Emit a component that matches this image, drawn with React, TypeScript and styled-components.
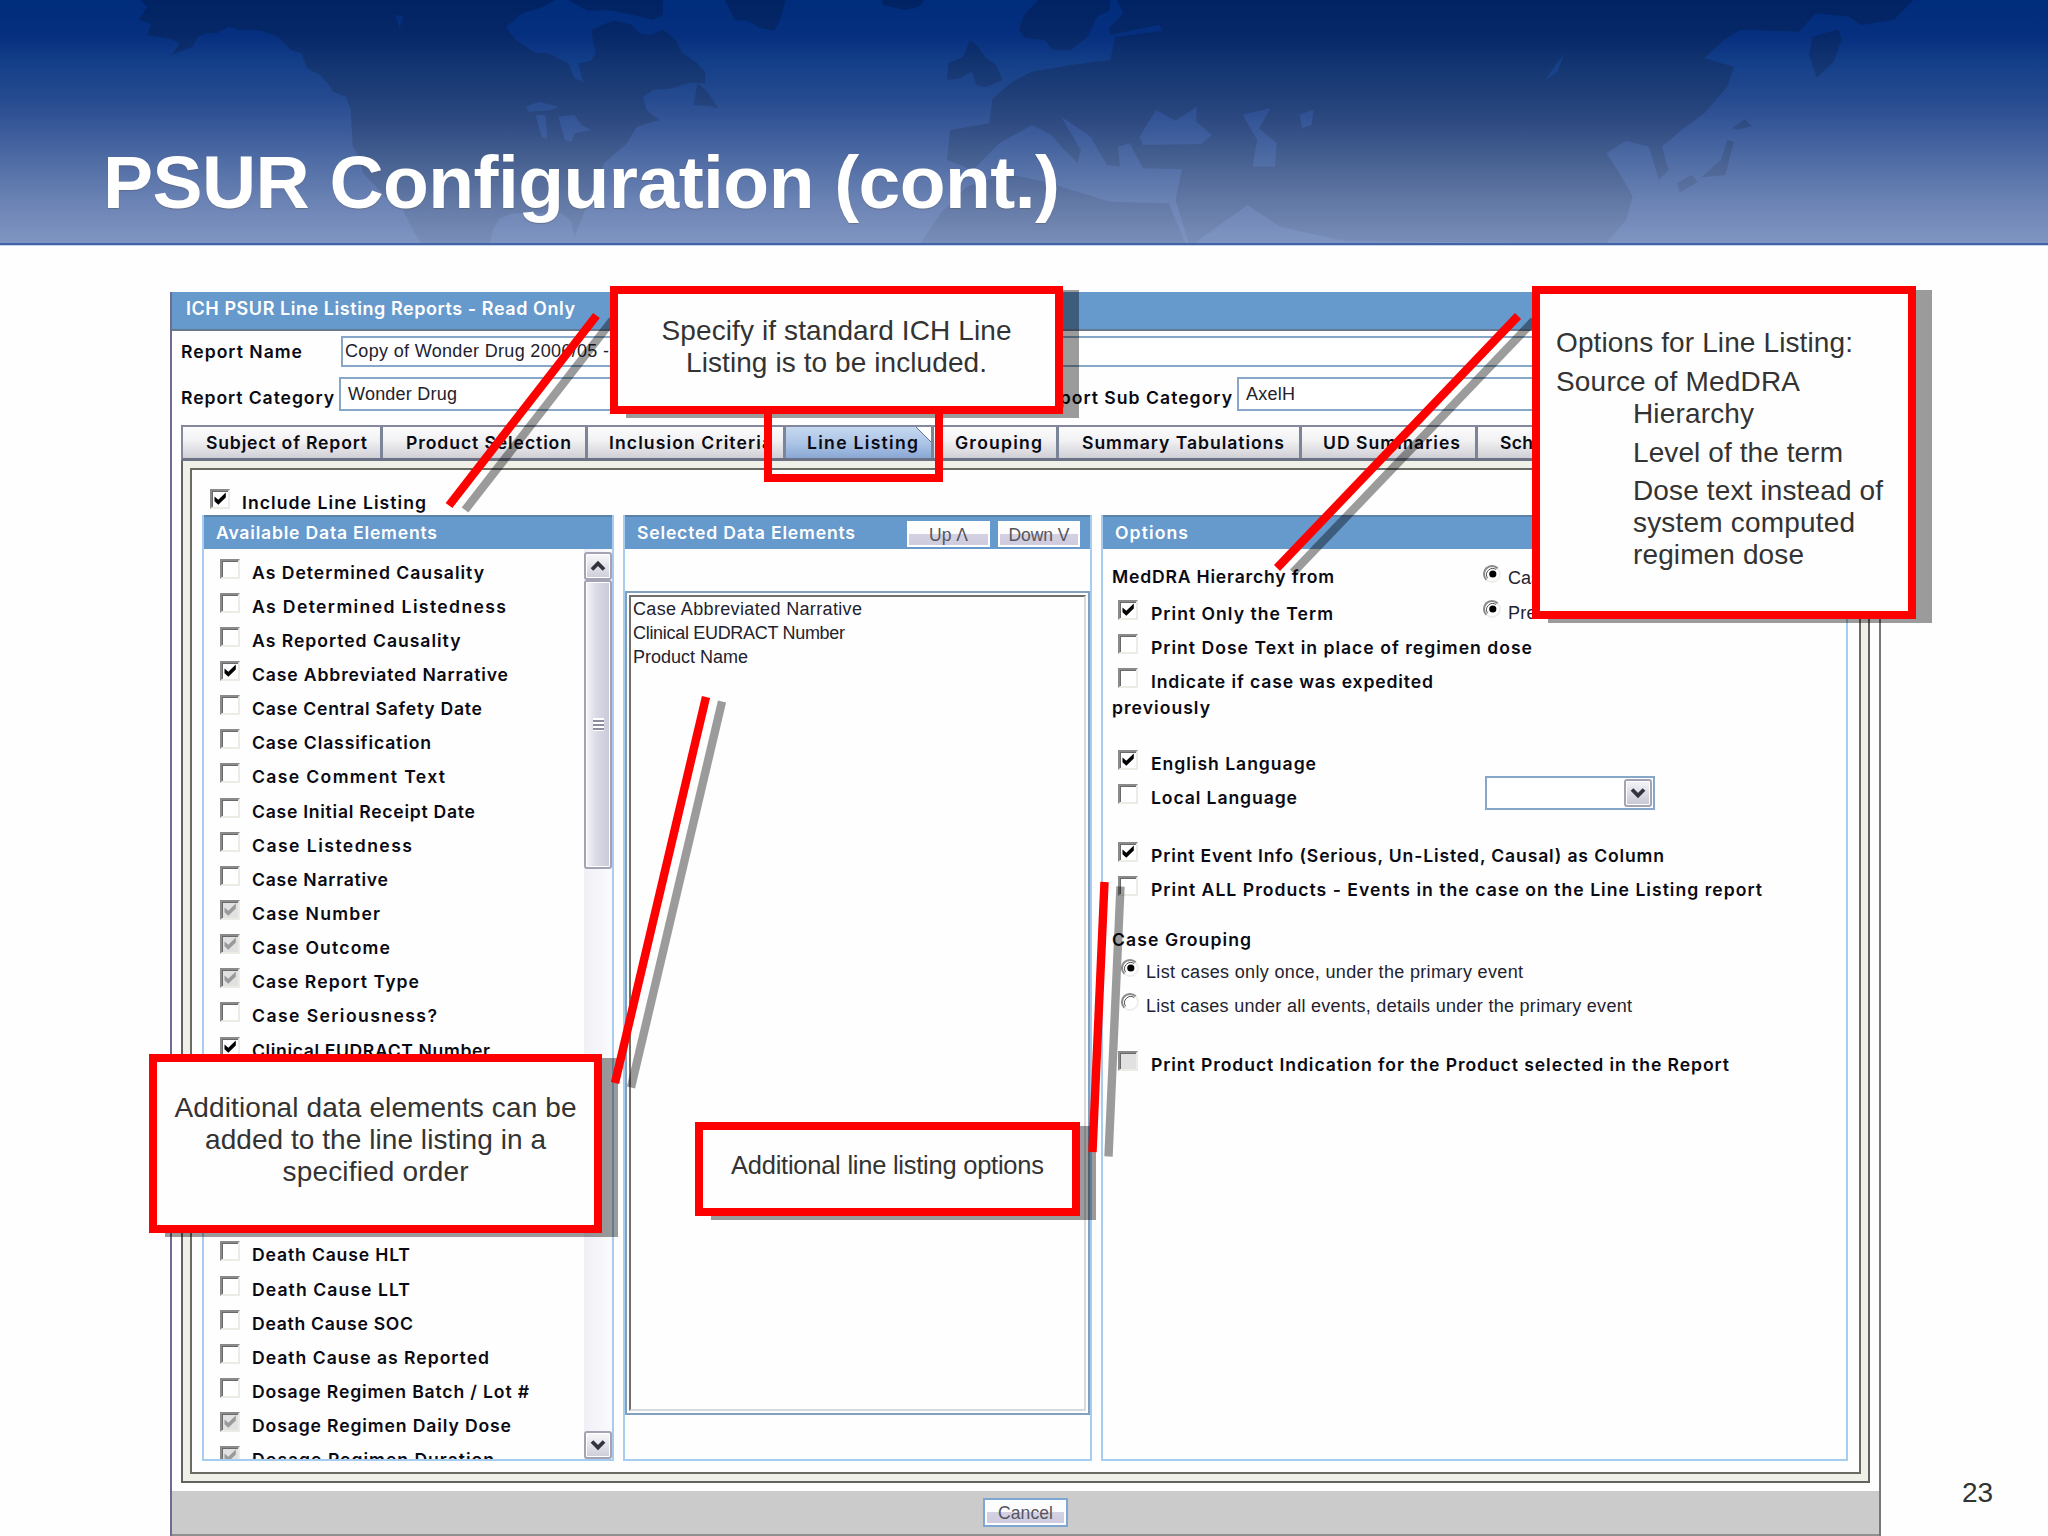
import React, { useLayoutEffect, useRef, useState } from 'react';
import styled, { createGlobalStyle, css } from 'styled-components';

const Global = createGlobalStyle`
  html, body { margin: 0; padding: 0; background: #fefefe; }
  * { box-sizing: border-box; }
`;

const labelFont = "Inter, 'Liberation Sans', Arial, sans-serif";
const plainFont = "'Liberation Sans', Arial, sans-serif";

const labelText = css`
  font-family: ${labelFont};
  font-size: 17.6px;
  font-weight: 580;
`;

const plainText = css`
  font-family: ${plainFont};
  font-size: 18px;
  font-weight: 400;
  color: #22222e;
`;

/* ---------- text tracked out to a fixed measure ---------- */

const Tracked = styled.span`
  display: inline-block;
  white-space: pre;
  flex: none;
`;

function Fit({ w, children }: { w: number; children: string }) {
  const ref = useRef<HTMLSpanElement>(null);
  const [spacing, setSpacing] = useState(0);
  useLayoutEffect(() => {
    if (!ref.current) return;
    const natural = ref.current.getBoundingClientRect().width;
    setSpacing((w - natural) / Math.max(1, children.length - 1));
  }, [w, children]);
  return (
    <Tracked ref={ref} style={{ letterSpacing: spacing, marginRight: -spacing }}>
      {children}
    </Tracked>
  );
}

/* ---------- slide ---------- */

const Slide = styled.main`
  position: relative;
  width: 2048px;
  height: 1536px;
  overflow: hidden;
  background: #fefefe;
  font-family: ${plainFont};
`;

const Banner = styled.header`
  position: relative;
  height: 246px;
  padding: 139px 0 0 103px;
  border-bottom: 1px solid #c4d4ee;
  box-shadow: inset 0 -2px 0 #4263a8;
  background: linear-gradient(
    #002c7c 0px, #06307f 36px, #16418a 68px, #24498e 95px, #3a5a9a 130px,
    #4f6ca4 160px, #6a82b4 200px, #8095c1 243px
  );
`;

const MapArt = styled.svg`
  position: absolute;
  left: 0;
  top: 0;
  width: 2048px;
  height: 243px;
`;

const SlideTitle = styled.h1`
  position: relative;
  margin: 0;
  color: #fff;
  font-size: 75px;
  line-height: 86px;
  font-weight: 700;
  text-shadow: 0 1px 1px rgba(90, 95, 110, 0.6);
`;

const PageNumber = styled.div`
  position: absolute;
  left: 1962px;
  top: 1476px;
  font-size: 28px;
  line-height: 34px;
  color: #333;
`;

/* ---------- application window ---------- */

const Window = styled.section`
  display: flex;
  flex-direction: column;
  width: 1711px;
  height: 1244px;
  margin: 46px 0 0 170px;
  border-left: 2px solid #6c6c94;
  border-right: 2px solid #77777a;
  background: #fefefe;
  ${labelText}
  color: #0a0a14;
`;

const TitleBar = styled.div`
  flex: none;
  height: 39px;
  padding: 0 0 4px 14px;
  display: flex;
  align-items: center;
  background: #6699cc;
  border-bottom: 2px solid #66798f;
  color: #fff;
  font-size: 18px;
  font-weight: 600;
`;

const Fields = styled.div`
  flex: none;
  height: 94px;
  padding: 5px 0 0 9px;
`;

const FieldRow = styled.div<{ $gap?: number }>`
  display: flex;
  align-items: center;
  margin-top: ${(p) => p.$gap ?? 0}px;
`;

const FieldLabel = styled.label<{ $w: number; $drop?: number; $end?: boolean }>`
  flex: none;
  width: ${(p) => p.$w}px;
  padding-top: ${(p) => p.$drop ?? 0}px;
  padding-right: ${(p) => (p.$end ? 5 : 0)}px;
  text-align: ${(p) => (p.$end ? 'right' : 'left')};
`;

const TextBox = styled.div<{ $w: number; $h: number; $pad: number }>`
  flex: none;
  display: flex;
  align-items: center;
  width: ${(p) => p.$w}px;
  height: ${(p) => p.$h}px;
  padding-left: ${(p) => p.$pad}px;
  border: 2px solid #86a7c8;
  background: #fff;
  ${plainText}
`;

const Tabs = styled.nav`
  flex: none;
  display: flex;
  height: 36px;
  margin: 0 9px;
  border-top: 2px solid #83889c;
  border-bottom: 3px solid #6d7184;
  border-left: 2px solid #83889c;
`;

const Tab = styled.div<{ $w: number; $pad: number; $active?: boolean }>`
  flex: none;
  display: flex;
  align-items: center;
  width: ${(p) => p.$w}px;
  padding: 0 0 1px ${(p) => p.$pad}px;
  border-right: 3px solid #7c8598;
  background: linear-gradient(#fcfcfd, #f1f1f3 45%, #cfcfd6);
  overflow: hidden;
  ${(p) =>
    p.$active &&
    css`
      background: linear-gradient(225deg, #fff 0 10px, #5a7299 10px 11.2px, transparent 11.2px),
        linear-gradient(#c5d8f0, #adc5e6 50%, #8aa8d6);
    `}
`;

const Frame = styled.div`
  flex: none;
  height: 1022px;
  margin: 0 9px;
  padding: 7px;
  border: 2px solid #62625e;
  border-top: 0;
  background: #eff0e8;
`;

const TabBody = styled.div`
  display: flex;
  flex-direction: column;
  height: 1006px;
  background: #fefefe;
  border: 2px solid #6b6b66;
`;

const IncludeRow = styled.div`
  flex: none;
  display: flex;
  align-items: center;
  gap: 12px;
  height: 45px;
  padding: 19px 0 0 18px;
`;

const Panels = styled.div`
  flex: none;
  display: grid;
  grid-template-columns: 412px 469px 747px;
  column-gap: 9px;
  height: 946px;
  margin-left: 10px;
`;

const Panel = styled.section`
  display: flex;
  flex-direction: column;
  min-height: 0;
  border: 2px solid #a6cdf0;
  border-top: 0;
  overflow: hidden;
`;

const PanelHead = styled.header`
  flex: none;
  display: flex;
  align-items: center;
  height: 34px;
  margin: 0 -2px;
  padding: 0 12px 1px 14px;
  border-top: 2px solid #5c82a8;
  background: #6699cc;
  color: #fff;
  font-size: 17.6px;
  font-weight: 600;
`;

const HeadActions = styled.div`
  display: flex;
  gap: 8px;
  margin-left: auto;
  padding-top: 3px;
`;

const PushButton = styled.button<{ $w: number; $h: number; $blue?: boolean }>`
  width: ${(p) => p.$w}px;
  height: ${(p) => p.$h}px;
  padding: 2px 0 0;
  border: ${(p) => (p.$blue ? '2px solid #7fa6d2' : '0')};
  box-shadow: inset 0 0 0 2px #fff;
  background: linear-gradient(#fdfdfe 0 48%, #d4d2e2 50%, #cdcbdd 90%, #fff);
  font: 400 17.5px ${plainFont};
  color: #55555e;
`;

/* ---------- check boxes, radios, scroll bar ---------- */

const Box = styled.span<{ $dim?: boolean }>`
  flex: none;
  width: 20px;
  height: 20px;
  margin-bottom: 7px;
  border: 2px solid #ecece6;
  border-top-color: #8a8a8a;
  border-left-color: #8a8a8a;
  box-shadow: inset 1px 1px 0 #6a6a6a;
  background: ${(p) => (p.$dim ? '#e2e1e2' : '#fff')};
  svg { display: block; width: 16px; height: 16px; }
`;

type CheckState = 'off' | 'on' | 'dim' | 'dimOff';

function Check({ state }: { state: CheckState }) {
  return (
    <Box $dim={state === 'dim' || state === 'dimOff'}>
      {(state === 'on' || state === 'dim') && (
        <svg viewBox="0 0 16 16">
          <path d="M2.5 5.5 L6.3 8.8 L13.8 1.5 V6.5 L6.3 13.8 L2.5 10.2 Z" fill={state === 'on' ? '#000' : '#9a9a9a'} />
        </svg>
      )}
    </Box>
  );
}

const RadioArt = styled.svg`
  flex: none;
  width: 20px;
  height: 20px;
  margin-bottom: 8px;
`;

function Radio({ on }: { on?: boolean }) {
  return (
    <RadioArt viewBox="0 0 20 20">
      <circle cx="10" cy="10" r="8" fill="#fff" stroke="#eeeeea" strokeWidth="2" />
      <path d="M4.3 15.7 A8 8 0 0 1 15.7 4.3" fill="none" stroke="#8a8a8a" strokeWidth="2" />
      <path d="M5.6 14.2 A6.2 6.2 0 0 1 14.2 5.6" fill="none" stroke="#555" strokeWidth="1" />
      {on && <circle cx="10.8" cy="10" r="3.6" fill="#000" />}
    </RadioArt>
  );
}

const ListArea = styled.div`
  flex: 1;
  display: flex;
  min-height: 0;
`;

const Rows = styled.ul`
  flex: 1;
  margin: 0;
  padding: 6px 0 0 16px;
  list-style: none;
  overflow: hidden;
`;

const Row = styled.li`
  display: flex;
  align-items: center;
  gap: 12px;
  height: 34.15px;
`;

const RowGap = styled.li`
  height: 170.75px;
`;

const ScrollBar = styled.div`
  flex: none;
  display: flex;
  flex-direction: column;
  width: 28px;
  padding-top: 3px;
  background: linear-gradient(90deg, #efeff6, #fbfbfd);
`;

const scrollFace = css`
  border: 2px solid #a3a3b4;
  border-radius: 3px;
  box-shadow: inset 0 0 0 1px #fff;
`;

const ScrollButton = styled.div`
  ${scrollFace}
  flex: none;
  display: flex;
  align-items: center;
  justify-content: center;
  height: 28px;
  background: linear-gradient(#f8f8fb, #cdcdd9);
`;

const Thumb = styled.div`
  ${scrollFace}
  height: 289px;
  margin-bottom: auto;
  display: flex;
  align-items: center;
  justify-content: center;
  background: linear-gradient(90deg, #f4f4fa, #dcdce8 40%, #c9c9d8);
`;

const Grip = styled.div`
  width: 11px;
  height: 13px;
  background: repeating-linear-gradient(#fff 0 2px, #8d8da0 2px 4px);
`;

function Chevron({ up }: { up?: boolean }) {
  return (
    <svg width="16" height="12" viewBox="0 0 16 12">
      <path d={up ? 'M2 9.5 L8 3.5 L14 9.5' : 'M2 2.5 L8 8.5 L14 2.5'} fill="none" stroke="#333340" strokeWidth="3.8" />
    </svg>
  );
}

/* ---------- selected elements ---------- */

const SelectedList = styled.div`
  height: 824px;
  margin: 42px 0 0;
  padding: 2px;
  border: 2px solid #82a0c0;
`;

const SelectedInner = styled.div`
  height: 100%;
  padding: 0 0 0 2px;
  border: 2px solid #dadade;
  border-top-color: #6f6f6a;
  border-left-color: #6f6f6a;
  background: #fefefe;
`;

const SelectedItem = styled.div`
  height: 24px;
  line-height: 24px;
  ${plainText}
`;

/* ---------- options ---------- */

const OptionList = styled.div`
  padding: 10px 0 0 9px;
`;

const OptionRow = styled.div<{ $gap?: number; $indent?: number; $h?: number; $space?: number }>`
  display: flex;
  align-items: center;
  gap: ${(p) => p.$space ?? 13}px;
  height: ${(p) => p.$h ?? 34}px;
  margin-top: ${(p) => p.$gap ?? 0}px;
  padding-left: ${(p) => p.$indent ?? 0}px;
`;

const OptionLead = styled.div<{ $w: number }>`
  flex: none;
  display: flex;
  align-items: center;
  gap: 13px;
  width: ${(p) => p.$w}px;
`;

const Choice = styled.div<{ $w?: number; $drop?: number }>`
  flex: none;
  display: flex;
  align-items: center;
  gap: 6px;
  width: ${(p) => (p.$w ? p.$w + 'px' : 'auto')};
  padding-top: ${(p) => p.$drop ?? 0}px;
  ${plainText}
`;

const Combo = styled.div`
  display: flex;
  justify-content: flex-end;
  width: 170px;
  height: 34px;
  margin-top: -9px;
  padding: 1px;
  border: 2px solid #86a7c8;
  background: #fff;
`;

const ComboButton = styled.div`
  ${scrollFace}
  display: flex;
  align-items: center;
  justify-content: center;
  width: 28px;
  background: linear-gradient(#f4f4f8, #c6c6d4);
`;

const Footer = styled.footer`
  display: flex;
  justify-content: center;
  align-items: flex-start;
  height: 45px;
  margin-top: 8px;
  padding: 7px 0 0;
  background: #cccbcb;
  border-bottom: 2px solid #8f8f90;
`;

/* ---------- callouts over the window ---------- */

const Callout = styled.aside<{ $x: number; $y: number; $w: number; $h: number; $pt: number; $left?: boolean; $size?: number }>`
  position: absolute;
  left: ${(p) => p.$x}px;
  top: ${(p) => p.$y}px;
  width: ${(p) => p.$w}px;
  height: ${(p) => p.$h}px;
  padding: ${(p) => p.$pt}px 0 0 ${(p) => (p.$left ? 16 : 0)}px;
  border: 8px solid #fe0000;
  background: #fefefe;
  box-shadow: 16px 4px 0 rgba(0, 0, 0, 0.39);
  color: #333;
  font-size: ${(p) => p.$size ?? 28}px;
  line-height: 32px;
  text-align: ${(p) => (p.$left ? 'left' : 'center')};
`;

const Para = styled.p<{ $indent?: number; $gap?: number }>`
  margin: ${(p) => p.$gap ?? 0}px 0 0 ${(p) => p.$indent ?? 0}px;
  height: 32px;
`;

const TabMarker = styled.div`
  position: absolute;
  left: 764px;
  top: 406px;
  width: 179px;
  height: 76px;
  border: 8px solid #fe0000;
`;

const Pointers = styled.svg`
  position: absolute;
  left: 0;
  top: 0;
  width: 2048px;
  height: 1536px;
  pointer-events: none;
`;

type Seg = [number, number, number, number];

function PointerLines({ lines }: { lines: Seg[] }) {
  return (
    <Pointers viewBox="0 0 2048 1536">
      {lines.map(([x1, y1, x2, y2], i) => (
        <g key={i} strokeWidth="8.4">
          <line x1={x1 + 16} y1={y1 + 4.5} x2={x2 + 16} y2={y2 + 4.5} stroke="rgba(0,0,0,0.39)" />
          <line x1={x1} y1={y1} x2={x2} y2={y2} stroke="#fe0000" />
        </g>
      ))}
    </Pointers>
  );
}

/* ---------- data ---------- */

const firstRows: [string, number, CheckState][] = [
  ['As Determined Causality', 232, 'off'],
  ['As Determined Listedness', 254, 'off'],
  ['As Reported Causality', 208.5, 'off'],
  ['Case Abbreviated Narrative', 256, 'on'],
  ['Case Central Safety Date', 230, 'off'],
  ['Case Classification', 179, 'off'],
  ['Case Comment Text', 193, 'off'],
  ['Case Initial Receipt Date', 223, 'off'],
  ['Case Listedness', 160, 'off'],
  ['Case Narrative', 136, 'off'],
  ['Case Number', 128, 'dim'],
  ['Case Outcome', 138, 'dim'],
  ['Case Report Type', 167, 'dim'],
  ['Case Seriousness?', 185, 'off'],
  ['Clinical EUDRACT Number', 238, 'on'],
];

const lastRows: [string, number, CheckState][] = [
  ['Death Cause HLT', 158, 'off'],
  ['Death Cause LLT', 158, 'off'],
  ['Death Cause SOC', 161, 'off'],
  ['Death Cause as Reported', 237, 'off'],
  ['Dosage Regimen Batch / Lot #', 277, 'off'],
  ['Dosage Regimen Daily Dose', 259, 'dim'],
  ['Dosage Regimen Duration', 242, 'dim'],
];

const tabs: [string, number, number, number, boolean?][] = [
  ['Subject of Report', 200, 23, 161],
  ['Product Selection', 205, 23, 165],
  ['Inclusion Criteria', 198, 21, 163],
  ['Line Listing', 148, 21, 111, true],
  ['Grouping', 125, 21, 87],
  ['Summary Tabulations', 243, 23, 202],
  ['UD Summaries', 176, 21, 137],
  ['Scheduling', 180, 22, 98],
];

function DataRows({ rows }: { rows: [string, number, CheckState][] }) {
  return (
    <>
      {rows.map(([name, w, state]) => (
        <Row key={name}>
          <Check state={state} />
          <Fit w={w}>{name}</Fit>
        </Row>
      ))}
    </>
  );
}

function WorldMap() {
  return (
    <MapArt viewBox="0 0 3136 729" preserveAspectRatio="none">
      <defs>
        <linearGradient id="land" gradientUnits="userSpaceOnUse" x1="0" y1="0" x2="0" y2="729">
          <stop offset="0" stopColor="#00143c" stopOpacity="0.4" />
          <stop offset="0.5" stopColor="#1c2c48" stopOpacity="0.28" />
          <stop offset="0.8" stopColor="#3a4a60" stopOpacity="0.2" />
          <stop offset="1" stopColor="#4a5a70" stopOpacity="0.12" />
        </linearGradient>
      </defs>
      <g fill="url(#land)" fillRule="evenodd">
        <path d="M215 0 L225 22 212 60 232 72 225 105 262 118 275 130 262 165 295 140 303 110 318 98 330 102 350 80 365 90 400 92 425 110 445 150 462 160 470 205 490 225 502 250 510 275 530 290 537 330 540 440 552 480 556 520 590 590 615 625 635 700 645 729 750 729 755 690 765 655 785 640 860 640 875 665 880 710 890 660 905 580 925 490 960 430 975 380 1010 360 990 330 985 290 1000 270 1030 265 1055 248 1080 250 1080 215 1065 185 1045 160 1035 120 1015 88 995 105 980 100 965 72 940 62 925 72 905 90 912 160 905 182 885 190 893 245 880 235 870 190 840 160 820 158 790 120 775 80 800 40 830 22 850 0 Z M805 320 L825 305 855 320 845 330 810 335Z M820 345 L835 345 838 415 830 412Z M855 350 L880 345 890 375 905 390 880 400 875 425 865 420Z M605 45 L618 50 612 85Z" />
        <path d="M870 0 L1015 0 1015 45 1000 60 970 45 930 30 900 32Z" />
        <path d="M1068 248 L1085 280 1100 325 1085 318 1062 315Z" />
        <path d="M1110 0 L1203 0 1195 60 1185 92 1165 85 1145 62 1125 60Z" />
        <path d="M1350 0 L1415 0 1408 20 1385 30 1352 15Z" />
        <path d="M1450 240 L1452 190 1475 170 1485 120 1498 140 1508 170 1525 195 1535 240 1510 262 1495 255 1488 215 1470 235Z" />
        <path d="M1590 0 L1568 45 1560 90 1570 115 1600 120 1612 150 1640 150 1665 110 1680 50 1700 30 1700 0Z" />
        <path d="M1710 0 L1720 40 1698 85 1700 105 1775 75 1780 92 1708 110 1700 180 1640 195 1580 215 1550 245 1520 295 1515 370 1455 390 1450 480 1490 510 1530 430 1580 375 1610 405 1625 440 1650 490 1655 450 1625 350 1670 410 1695 495 1715 500 1712 440 1730 430 1750 505 1810 508 1800 600 1820 729 1830 729 1910 615 1960 680 2060 724 2460 729 2490 660 2500 590 2480 520 2460 460 2490 422 2525 440 2540 540 2555 510 2545 440 2575 390 2610 340 2645 260 2655 200 2610 175 2640 120 2665 90 2755 95 2780 40 2830 50 2850 75 2900 60 2930 0Z M1745 410 L1770 330 1800 362 1832 320 1832 365 1855 405 1840 432 1750 435Z M1903 345 L1945 325 1928 385 1955 430 1952 500 1918 500 1925 420Z M1990 345 L2012 328 2008 375 1994 385Z M2395 160 L2385 215 2365 242 2380 200Z" />
        <path d="M1410 729 L1440 640 1480 560 1540 520 1600 545 1700 605 1790 610 1800 660 1815 729Z" />
        <path d="M2775 110 L2815 88 2820 120 2808 185 2782 233 2770 165Z" />
        <path d="M2652 385 L2672 358 2682 378 2660 390Z M2645 420 L2655 425 2642 525 2605 532 2635 480Z M2568 550 L2590 525 2600 545 2572 578Z" />
      </g>
    </MapArt>
  );
}

export default function App() {
  return (
    <Slide>
      <Global />
      <Banner>
        <WorldMap />
        <SlideTitle><Fit w={957}>PSUR Configuration (cont.)</Fit></SlideTitle>
      </Banner>

      <Window>
        <TitleBar><Fit w={389}>ICH PSUR Line Listing Reports - Read Only</Fit></TitleBar>

        <Fields>
          <FieldRow>
            <FieldLabel $w={160}><Fit w={121}>Report Name</Fit></FieldLabel>
            <TextBox $w={1400} $h={31} $pad={2}><Fit w={264}>Copy of Wonder Drug 2006/05 -</Fit></TextBox>
          </FieldRow>
          <FieldRow $gap={10}>
            <FieldLabel $w={158} $drop={7}><Fit w={153}>Report Category</Fit></FieldLabel>
            <TextBox $w={560} $h={34} $pad={7}><Fit w={109}>Wonder Drug</Fit></TextBox>
            <FieldLabel $w={338} $drop={7} $end><Fit w={196}>Report Sub Category</Fit></FieldLabel>
            <TextBox $w={504} $h={34} $pad={7}><Fit w={49}>AxelH</Fit></TextBox>
          </FieldRow>
        </Fields>

        <Tabs>
          {tabs.map(([name, w, pad, tw, active]) => (
            <Tab key={name} $w={w} $pad={pad} $active={active}><Fit w={tw}>{name}</Fit></Tab>
          ))}
        </Tabs>

        <Frame>
          <TabBody>
            <IncludeRow>
              <Check state="on" />
              <Fit w={184}>Include Line Listing</Fit>
            </IncludeRow>
            <Panels>
              <Panel>
                <PanelHead><Fit w={221}>Available Data Elements</Fit></PanelHead>
                <ListArea>
                  <Rows>
                    <DataRows rows={firstRows} />
                    <RowGap />
                    <DataRows rows={lastRows} />
                  </Rows>
                  <ScrollBar>
                    <ScrollButton><Chevron up /></ScrollButton>
                    <Thumb><Grip /></Thumb>
                    <ScrollButton><Chevron /></ScrollButton>
                  </ScrollBar>
                </ListArea>
              </Panel>

              <Panel>
                <PanelHead>
                  <Fit w={218}>Selected Data Elements</Fit>
                  <HeadActions>
                    <PushButton $w={83} $h={26}><Fit w={39}>Up Λ</Fit></PushButton>
                    <PushButton $w={82} $h={26}><Fit w={61}>Down V</Fit></PushButton>
                  </HeadActions>
                </PanelHead>
                <SelectedList>
                  <SelectedInner>
                    <SelectedItem><Fit w={229}>Case Abbreviated Narrative</Fit></SelectedItem>
                    <SelectedItem><Fit w={212}>Clinical EUDRACT Number</Fit></SelectedItem>
                    <SelectedItem><Fit w={115}>Product Name</Fit></SelectedItem>
                  </SelectedInner>
                </SelectedList>
              </Panel>

              <Panel>
                <PanelHead><Fit w={73}>Options</Fit></PanelHead>
                <OptionList>
                  <OptionRow $space={0}>
                    <OptionLead $w={370}><Fit w={222}>MedDRA Hierarchy from</Fit></OptionLead>
                    <Choice $drop={4}><Radio on /><Fit w={42}>Case</Fit></Choice>
                  </OptionRow>
                  <OptionRow $gap={3} $indent={6} $space={0}>
                    <OptionLead $w={364}><Check state="on" /><Fit w={182}>Print Only the Term</Fit></OptionLead>
                    <Choice $w={144}><Radio on /><Fit w={77}>Preferred</Fit></Choice>
                    <Choice><Radio /><Fit w={105}>Lower Level</Fit></Choice>
                  </OptionRow>
                  <OptionRow $indent={6}><Check state="off" /><Fit w={381}>Print Dose Text in place of regimen dose</Fit></OptionRow>
                  <OptionRow $indent={6}><Check state="off" /><Fit w={282}>Indicate if case was expedited</Fit></OptionRow>
                  <OptionRow $gap={-1} $h={20}><Fit w={98}>previously</Fit></OptionRow>
                  <OptionRow $gap={29} $indent={6}><Check state="on" /><Fit w={165}>English Language</Fit></OptionRow>
                  <OptionRow $indent={6} $space={0}>
                    <OptionLead $w={367}><Check state="off" /><Fit w={146}>Local Language</Fit></OptionLead>
                    <Combo><ComboButton><Chevron /></ComboButton></Combo>
                  </OptionRow>
                  <OptionRow $gap={24} $indent={6}><Check state="on" /><Fit w={513}>Print Event Info (Serious, Un-Listed, Causal) as Column</Fit></OptionRow>
                  <OptionRow $indent={6}><Check state="off" /><Fit w={611}>Print ALL Products - Events in the case on the Line Listing report</Fit></OptionRow>
                  <OptionRow $gap={16}><Fit w={139}>Case Grouping</Fit></OptionRow>
                  <OptionRow $gap={-1} $indent={8}><Choice><Radio on /><Fit w={377}>List cases only once, under the primary event</Fit></Choice></OptionRow>
                  <OptionRow $indent={8}><Choice><Radio /><Fit w={486}>List cases under all events, details under the primary event</Fit></Choice></OptionRow>
                  <OptionRow $gap={24} $indent={6}><Check state="dimOff" /><Fit w={578}>Print Product Indication for the Product selected in the Report</Fit></OptionRow>
                </OptionList>
              </Panel>
            </Panels>
          </TabBody>
        </Frame>

        <Footer>
          <PushButton $w={85} $h={29} $blue><Fit w={55}>Cancel</Fit></PushButton>
        </Footer>
      </Window>

      <PointerLines lines={[[596.5, 315.5, 449, 505.5], [1518, 316, 1277, 568]]} />

      <Callout $x={610} $y={286} $w={453} $h={128} $pt={21}>
        <Para><Fit w={350}>Specify if standard ICH Line</Fit></Para>
        <Para><Fit w={301}>Listing is to be included.</Fit></Para>
      </Callout>
      <TabMarker />
      <Callout $x={1532} $y={286} $w={384} $h={333} $pt={33} $left>
        <Para><Fit w={297}>Options for Line Listing:</Fit></Para>
        <Para $gap={7}><Fit w={244}>Source of MedDRA</Fit></Para>
        <Para $indent={77}><Fit w={121}>Hierarchy</Fit></Para>
        <Para $gap={6.5} $indent={77}><Fit w={210}>Level of the term</Fit></Para>
        <Para $gap={6.5} $indent={77}><Fit w={250}>Dose text instead of</Fit></Para>
        <Para $indent={77}><Fit w={222}>system computed</Fit></Para>
        <Para $indent={77}><Fit w={171}>regimen dose</Fit></Para>
      </Callout>
      <Callout $x={149} $y={1054} $w={453} $h={179} $pt={30}>
        <Para><Fit w={402}>Additional data elements can be</Fit></Para>
        <Para><Fit w={341}>added to the line listing in a</Fit></Para>
        <Para><Fit w={186}>specified order</Fit></Para>
      </Callout>
      <Callout $x={695} $y={1122} $w={385} $h={94} $pt={19} $size={25.5}>
        <Para><Fit w={313}>Additional line listing options</Fit></Para>
      </Callout>

      <PointerLines lines={[[706, 697, 615, 1083], [1104.5, 882, 1092.5, 1152]]} />
      <PageNumber>23</PageNumber>
    </Slide>
  );
}
